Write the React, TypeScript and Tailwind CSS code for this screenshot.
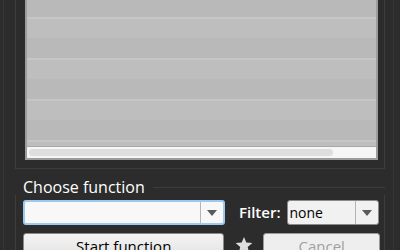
import { useState } from 'react';

const font = { fontFamily: '"Open Sans", "Liberation Sans", sans-serif' };

// Striped rows of the list view; the list is scrolled, so the first row is cut.
const rows = [17, 41, 41, 41, 41];

function Arrow() {
  return (
    <svg width="10" height="6" viewBox="0 0 10 6" className="block">
      <path d="M0 0h10L5 6z" fill="#5a5a5a" />
    </svg>
  );
}

function Combo({ value, focused, width }: { value: string; focused?: boolean; width: string }) {
  return (
    <div
      className={`${width} h-[25px] flex rounded-[3px] ${
        focused ? 'border-2 border-[#9cc9ef] bg-[#f8f8f8]' : 'border border-[#8a8a8a] bg-[#f1f1f1]'
      }`}
    >
      <div className="flex-1 flex items-center pl-[2px] text-[14px] text-black leading-none">{value}</div>
      <div className="w-[23px] border-l border-[#b5b5b5] flex items-center justify-center">
        <Arrow />
      </div>
    </div>
  );
}

export default function App() {
  const [filter] = useState('none');

  return (
    <div className="w-[400px] h-[250px] overflow-hidden bg-[#2c2c2c]" style={font}>
      <div className="h-full ml-[3px] mr-[6px] border-x border-[#363636] pl-[11px] pr-[8px] flex flex-col">
        {/* list group */}
        <div className="h-[169px] shrink-0 border-x border-b border-[#3d3d3d] pl-[9px] pr-[6px]">
          <div className="h-[160px] border-x-2 border-b-2 border-[#9c9c9c] flex flex-col overflow-hidden">
            <div className="flex-1 flex flex-col overflow-hidden">
              {rows.map((h, i) =>
                i === 0 ? (
                  <div key={i} className="h-[17px] shrink-0 bg-[#b9b9b9]" />
                ) : (
                  <div key={i} className="shrink-0 flex flex-col">
                    <div className="h-[2px] bg-[#c6c6c6]" />
                    <div className="h-[19px] bg-[#bebebe]" />
                    <div className="h-[20px] bg-[#b9b9b9]" />
                  </div>
                )
              )}
            </div>
            <div className="h-[12px] shrink-0 bg-[#f6f6f6] border-t border-[#a8a8a8] flex items-center px-[2px]">
              <div className="w-[304px] h-[7px] rounded-full bg-[#dedede]" />
            </div>
          </div>
        </div>

        {/* choose function group */}
        <div className="mt-[10px] flex items-center">
          <span className="pl-[8px] pr-[8px] text-[16px] text-white leading-none">Choose function</span>
          <div className="flex-1 h-px bg-[#3d3d3d]" />
        </div>
        <div className="flex-1 border-x border-[#3d3d3d] pl-[7px] pr-[4px] pt-[5px] flex flex-col gap-[8px]">
          <div className="flex items-center">
            <Combo value="" focused width="w-[202px]" />
            <span className="ml-[14px] mr-[6px] text-[15px] font-semibold text-white leading-none">Filter:</span>
            <Combo value={filter} width="w-[92px]" />
          </div>
          <div className="flex items-start">
            <button className="w-[202px] h-[26px] rounded-[3px] border border-[#8a8a8a] bg-gradient-to-b from-[#f4f4f4] to-[#e2e2e2] text-[15px] text-black leading-none">
              Start function
            </button>
            <div className="w-[39px] flex justify-center pt-[4px]">
              <svg width="18" height="17" viewBox="0 0 24 23">
                <path d="M12 0l3.1 7.6 8.2.6-6.3 5.3 2 8L12 17.2 4.9 21.5l2-8L.7 8.2l8.2-.6z" fill="#dedede" />
              </svg>
            </div>
            <button className="w-[117px] h-[26px] rounded-[3px] border border-[#9a9a9a] bg-[#eeeeee] text-[15px] text-[#a0a0a0] leading-none">
              Cancel
            </button>
          </div>
        </div>
      </div>
    </div>
  );
}
